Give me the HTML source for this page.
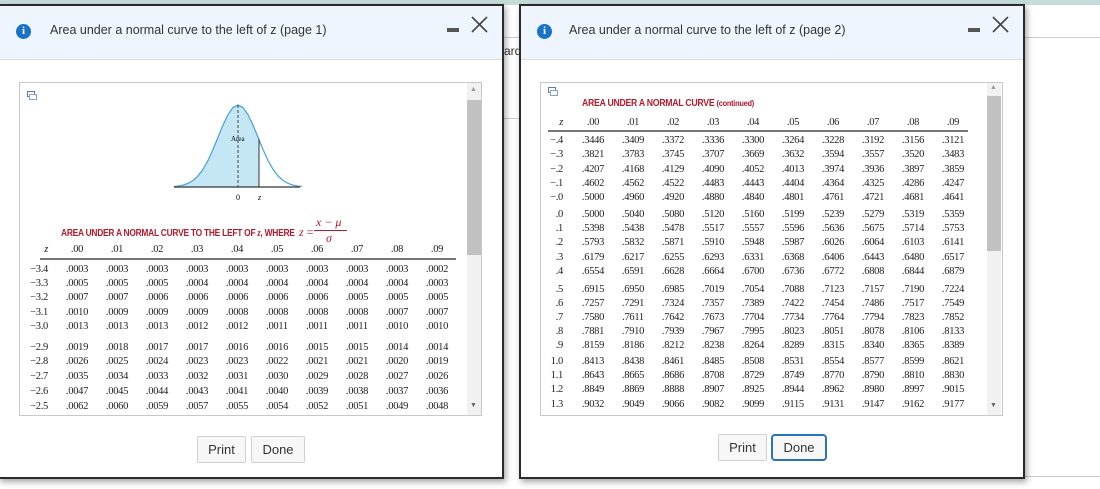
<!DOCTYPE html>
<html><head><meta charset="utf-8"><style>
*{margin:0;padding:0;box-sizing:border-box}
body{width:1100px;height:489px;overflow:hidden;background:#fff;position:relative;font-family:"Liberation Sans",sans-serif}
.abs{position:absolute}
.dlg{position:absolute;background:#fff;border:2px solid #2b2b2b;box-shadow:2px 3px 6px rgba(0,0,0,.35)}
.hdr{position:absolute;left:0;right:0;top:0;height:54px;background:#eff5fc;border-bottom:1px solid #d6dfe8}
.ttl{position:absolute;top:17px;font-size:12.5px;color:#333}
.info{position:absolute;top:18px;width:15px;height:15px;border-radius:50%;background:#1b73c7;color:#fff;font:bold 11px "Liberation Serif",serif;text-align:center;line-height:15px}
.min{position:absolute;top:22px;width:12px;height:4px;background:#555}
.x{position:absolute;top:10px}
.box{position:absolute;border:1px solid #c8c8c8;background:#fff;overflow:hidden}
.sb{position:absolute;background:#f1f1f1}
.th{position:absolute;background:#c1c1c1}
.btn{position:absolute;height:27px;border:1px solid #d0d0d0;background:#f7f7f7;border-radius:2px;font-size:13px;color:#333;text-align:center;line-height:25px}
.r{position:absolute;display:flex;font-family:"Liberation Serif",serif;font-size:10.5px;color:#222;white-space:nowrap;letter-spacing:-0.3px}
.r span{display:block;width:40px;text-align:center}
.r span.z{text-align:right}
.red{color:#b01c2e;font-family:"Liberation Sans",sans-serif;font-weight:bold;letter-spacing:-0.3px;position:absolute;transform-origin:left;white-space:nowrap}
.rule{position:absolute;height:2px;background:#777}
.l .z{width:35px;padding-right:9px}
.rr .z{width:40px;padding-right:10px}
</style></head><body>
<div class="abs" style="left:0;top:0;width:1100px;height:5px;background:#c6dcdb"></div>
<div class="abs" style="left:1020px;top:37px;width:80px;height:1px;background:#ccc"></div>
<div class="abs" style="left:500px;top:37px;width:25px;height:1px;background:#ccc"></div>
<div class="abs" style="left:500px;top:118px;width:25px;height:1px;background:#ccc"></div>
<div class="abs" style="left:504px;top:44px;font-size:12px;color:#333">ard</div>
<div class="abs" style="left:1020px;top:476px;width:80px;height:1px;background:#ccc"></div>

<!-- LEFT DIALOG -->
<div class="dlg" style="left:-2px;top:4px;width:506px;height:475px">
<div class="hdr"><div class="info" style="left:16px">i</div><div class="ttl" style="left:50px">Area under a normal curve to the left of z (page 1)</div><div class="min" style="left:447px"></div><svg class="x" style="left:471px" width="18" height="17"><path d="M1,1 L16,16 M16,1 L1,16" stroke="#444" stroke-width="1.6"/></svg></div>
</div>
<div class="box" style="left:19px;top:82px;width:463px;height:334px"></div>
<svg class="abs" style="left:27px;top:91px" width="10" height="9"><rect x="0.5" y="0.5" width="7" height="5" fill="none" stroke="#5a7fb8"/><rect x="2.5" y="3.5" width="7" height="5" fill="#fff" stroke="#8aa3cc"/></svg>
<div class="sb" style="left:467px;top:83px;width:14px;height:332px"></div>
<div class="th" style="left:467px;top:100px;width:14px;height:155px"></div>
<div class="abs" style="left:470px;top:86px;font-size:7px;color:#999">▲</div>
<div class="abs" style="left:470px;top:402px;font-size:7px;color:#666">▼</div>
<svg class="abs" style="left:160px;top:100px" width="150" height="105">
<path d="M14,86.5 L18,86.1 L23,85.1 L28,83.4 L33,80.5 L38,75.9 L43,69.3 L48,60.4 L53,49.5 L58,37.3 L63,25.1 L68,14.6 L73,7.5 L78,5 L83,7.5 L88,14.6 L93,25.1 L98,37.3 L99,39.7 L99,87 L14,87 Z" fill="#c5e6f5"/>
<path d="M14,86.5 L18,86.1 L23,85.1 L28,83.4 L33,80.5 L38,75.9 L43,69.3 L48,60.4 L53,49.5 L58,37.3 L63,25.1 L68,14.6 L73,7.5 L78,5 L83,7.5 L88,14.6 L93,25.1 L98,37.3 L103,49.5 L108,60.4 L113,69.3 L118,75.9 L123,80.5 L128,83.4 L133,85.1 L138,86.1 L142,86.5" fill="none" stroke="#4ea8d6" stroke-width="1.3" stroke-linejoin="round"/>
<line x1="14" y1="87" x2="140" y2="87" stroke="#333" stroke-width="1.2"/>
<line x1="99" y1="39" x2="99" y2="87" stroke="#333"/>
<line x1="78" y1="5" x2="78" y2="87" stroke="#444" stroke-dasharray="3,2"/>
<text x="71" y="41" font-size="7" font-family="Liberation Serif">Area</text>
<text x="76" y="100" font-size="8" font-family="Liberation Serif">0</text>
<text x="98" y="100" font-size="8" font-family="Liberation Serif" font-style="italic">z</text>
</svg>
<div class="red" style="left:61px;top:228px;font-size:10px;transform:scaleX(.84)">AREA UNDER A NORMAL CURVE TO THE LEFT OF <i style="font-family:'Liberation Serif'">z</i>, WHERE</div>
<div class="abs" style="left:299px;top:225px;color:#b01c2e;font:12px 'Liberation Serif',serif"><i>z</i> =</div>
<div class="abs" style="left:316px;top:215px;color:#b01c2e;font:italic 12px 'Liberation Serif',serif">x − μ</div>
<div class="abs" style="left:314px;top:230px;width:33px;height:1px;background:#b01c2e"></div>
<div class="abs" style="left:326px;top:231px;color:#b01c2e;font:italic 12px 'Liberation Serif',serif">σ</div>

<div class="r l" style="left:22px;top:244px"><span class="z"><i>z</i></span><span>.00</span><span>.01</span><span>.02</span><span>.03</span><span>.04</span><span>.05</span><span>.06</span><span>.07</span><span>.08</span><span>.09</span></div>
<div class="rule" style="left:40px;top:258px;width:416px"></div>
<div class="r l" style="left:22px;top:264px"><span class="z">−3.4</span><span>.0003</span><span>.0003</span><span>.0003</span><span>.0003</span><span>.0003</span><span>.0003</span><span>.0003</span><span>.0003</span><span>.0003</span><span>.0002</span></div>
<div class="r l" style="left:22px;top:278px"><span class="z">−3.3</span><span>.0005</span><span>.0005</span><span>.0005</span><span>.0004</span><span>.0004</span><span>.0004</span><span>.0004</span><span>.0004</span><span>.0004</span><span>.0003</span></div>
<div class="r l" style="left:22px;top:292px"><span class="z">−3.2</span><span>.0007</span><span>.0007</span><span>.0006</span><span>.0006</span><span>.0006</span><span>.0006</span><span>.0006</span><span>.0005</span><span>.0005</span><span>.0005</span></div>
<div class="r l" style="left:22px;top:307px"><span class="z">−3.1</span><span>.0010</span><span>.0009</span><span>.0009</span><span>.0009</span><span>.0008</span><span>.0008</span><span>.0008</span><span>.0008</span><span>.0007</span><span>.0007</span></div>
<div class="r l" style="left:22px;top:321px"><span class="z">−3.0</span><span>.0013</span><span>.0013</span><span>.0013</span><span>.0012</span><span>.0012</span><span>.0011</span><span>.0011</span><span>.0011</span><span>.0010</span><span>.0010</span></div>
<div class="r l" style="left:22px;top:342px"><span class="z">−2.9</span><span>.0019</span><span>.0018</span><span>.0017</span><span>.0017</span><span>.0016</span><span>.0016</span><span>.0015</span><span>.0015</span><span>.0014</span><span>.0014</span></div>
<div class="r l" style="left:22px;top:356px"><span class="z">−2.8</span><span>.0026</span><span>.0025</span><span>.0024</span><span>.0023</span><span>.0023</span><span>.0022</span><span>.0021</span><span>.0021</span><span>.0020</span><span>.0019</span></div>
<div class="r l" style="left:22px;top:371px"><span class="z">−2.7</span><span>.0035</span><span>.0034</span><span>.0033</span><span>.0032</span><span>.0031</span><span>.0030</span><span>.0029</span><span>.0028</span><span>.0027</span><span>.0026</span></div>
<div class="r l" style="left:22px;top:386px"><span class="z">−2.6</span><span>.0047</span><span>.0045</span><span>.0044</span><span>.0043</span><span>.0041</span><span>.0040</span><span>.0039</span><span>.0038</span><span>.0037</span><span>.0036</span></div>
<div class="r l" style="left:22px;top:401px"><span class="z">−2.5</span><span>.0062</span><span>.0060</span><span>.0059</span><span>.0057</span><span>.0055</span><span>.0054</span><span>.0052</span><span>.0051</span><span>.0049</span><span>.0048</span></div>
<div class="btn" style="left:197px;top:436px;width:49px">Print</div>
<div class="btn" style="left:251px;top:436px;width:54px">Done</div>

<!-- RIGHT DIALOG -->
<div class="dlg" style="left:519px;top:4px;width:506px;height:475px">
<div class="hdr"><div class="info" style="left:16px">i</div><div class="ttl" style="left:48px">Area under a normal curve to the left of z (page 2)</div><div class="min" style="left:447px"></div><svg class="x" style="left:471px" width="18" height="17"><path d="M1,1 L16,16 M16,1 L1,16" stroke="#444" stroke-width="1.6"/></svg></div>
</div>
<div class="box" style="left:540px;top:82px;width:463px;height:334px"></div>
<svg class="abs" style="left:548px;top:87px" width="10" height="9"><rect x="0.5" y="0.5" width="7" height="5" fill="none" stroke="#5a7fb8"/><rect x="2.5" y="3.5" width="7" height="5" fill="#fff" stroke="#8aa3cc"/></svg>
<div class="sb" style="left:987px;top:83px;width:14px;height:332px"></div>
<div class="th" style="left:987px;top:96px;width:14px;height:155px"></div>
<div class="abs" style="left:990px;top:84px;font-size:7px;color:#999">▲</div>
<div class="abs" style="left:990px;top:402px;font-size:7px;color:#666">▼</div>
<div class="red" style="left:582px;top:98px;font-size:10px;transform:scaleX(.87)">AREA UNDER A NORMAL CURVE <span style="font-size:8.5px">(continued)</span></div>
<div class="r rr" style="left:533px;top:117px"><span class="z"><i>z</i></span><span>.00</span><span>.01</span><span>.02</span><span>.03</span><span>.04</span><span>.05</span><span>.06</span><span>.07</span><span>.08</span><span>.09</span></div>
<div class="rule" style="left:548px;top:130px;width:420px"></div>
<div class="r rr" style="left:533px;top:135px"><span class="z">−.4</span><span>.3446</span><span>.3409</span><span>.3372</span><span>.3336</span><span>.3300</span><span>.3264</span><span>.3228</span><span>.3192</span><span>.3156</span><span>.3121</span></div>
<div class="r rr" style="left:533px;top:149px"><span class="z">−.3</span><span>.3821</span><span>.3783</span><span>.3745</span><span>.3707</span><span>.3669</span><span>.3632</span><span>.3594</span><span>.3557</span><span>.3520</span><span>.3483</span></div>
<div class="r rr" style="left:533px;top:164px"><span class="z">−.2</span><span>.4207</span><span>.4168</span><span>.4129</span><span>.4090</span><span>.4052</span><span>.4013</span><span>.3974</span><span>.3936</span><span>.3897</span><span>.3859</span></div>
<div class="r rr" style="left:533px;top:178px"><span class="z">−.1</span><span>.4602</span><span>.4562</span><span>.4522</span><span>.4483</span><span>.4443</span><span>.4404</span><span>.4364</span><span>.4325</span><span>.4286</span><span>.4247</span></div>
<div class="r rr" style="left:533px;top:192px"><span class="z">−.0</span><span>.5000</span><span>.4960</span><span>.4920</span><span>.4880</span><span>.4840</span><span>.4801</span><span>.4761</span><span>.4721</span><span>.4681</span><span>.4641</span></div>
<div class="r rr" style="left:533px;top:209px"><span class="z">.0</span><span>.5000</span><span>.5040</span><span>.5080</span><span>.5120</span><span>.5160</span><span>.5199</span><span>.5239</span><span>.5279</span><span>.5319</span><span>.5359</span></div>
<div class="r rr" style="left:533px;top:223px"><span class="z">.1</span><span>.5398</span><span>.5438</span><span>.5478</span><span>.5517</span><span>.5557</span><span>.5596</span><span>.5636</span><span>.5675</span><span>.5714</span><span>.5753</span></div>
<div class="r rr" style="left:533px;top:237px"><span class="z">.2</span><span>.5793</span><span>.5832</span><span>.5871</span><span>.5910</span><span>.5948</span><span>.5987</span><span>.6026</span><span>.6064</span><span>.6103</span><span>.6141</span></div>
<div class="r rr" style="left:533px;top:252px"><span class="z">.3</span><span>.6179</span><span>.6217</span><span>.6255</span><span>.6293</span><span>.6331</span><span>.6368</span><span>.6406</span><span>.6443</span><span>.6480</span><span>.6517</span></div>
<div class="r rr" style="left:533px;top:266px"><span class="z">.4</span><span>.6554</span><span>.6591</span><span>.6628</span><span>.6664</span><span>.6700</span><span>.6736</span><span>.6772</span><span>.6808</span><span>.6844</span><span>.6879</span></div>
<div class="r rr" style="left:533px;top:284px"><span class="z">.5</span><span>.6915</span><span>.6950</span><span>.6985</span><span>.7019</span><span>.7054</span><span>.7088</span><span>.7123</span><span>.7157</span><span>.7190</span><span>.7224</span></div>
<div class="r rr" style="left:533px;top:298px"><span class="z">.6</span><span>.7257</span><span>.7291</span><span>.7324</span><span>.7357</span><span>.7389</span><span>.7422</span><span>.7454</span><span>.7486</span><span>.7517</span><span>.7549</span></div>
<div class="r rr" style="left:533px;top:312px"><span class="z">.7</span><span>.7580</span><span>.7611</span><span>.7642</span><span>.7673</span><span>.7704</span><span>.7734</span><span>.7764</span><span>.7794</span><span>.7823</span><span>.7852</span></div>
<div class="r rr" style="left:533px;top:326px"><span class="z">.8</span><span>.7881</span><span>.7910</span><span>.7939</span><span>.7967</span><span>.7995</span><span>.8023</span><span>.8051</span><span>.8078</span><span>.8106</span><span>.8133</span></div>
<div class="r rr" style="left:533px;top:340px"><span class="z">.9</span><span>.8159</span><span>.8186</span><span>.8212</span><span>.8238</span><span>.8264</span><span>.8289</span><span>.8315</span><span>.8340</span><span>.8365</span><span>.8389</span></div>
<div class="r rr" style="left:533px;top:356px"><span class="z">1.0</span><span>.8413</span><span>.8438</span><span>.8461</span><span>.8485</span><span>.8508</span><span>.8531</span><span>.8554</span><span>.8577</span><span>.8599</span><span>.8621</span></div>
<div class="r rr" style="left:533px;top:370px"><span class="z">1.1</span><span>.8643</span><span>.8665</span><span>.8686</span><span>.8708</span><span>.8729</span><span>.8749</span><span>.8770</span><span>.8790</span><span>.8810</span><span>.8830</span></div>
<div class="r rr" style="left:533px;top:384px"><span class="z">1.2</span><span>.8849</span><span>.8869</span><span>.8888</span><span>.8907</span><span>.8925</span><span>.8944</span><span>.8962</span><span>.8980</span><span>.8997</span><span>.9015</span></div>
<div class="r rr" style="left:533px;top:399px"><span class="z">1.3</span><span>.9032</span><span>.9049</span><span>.9066</span><span>.9082</span><span>.9099</span><span>.9115</span><span>.9131</span><span>.9147</span><span>.9162</span><span>.9177</span></div>
<div class="btn" style="left:718px;top:434px;width:49px">Print</div>
<div class="btn" style="left:771px;top:434px;width:56px;border:2px solid #2a73b8;border-radius:4px;line-height:23px">Done</div>
</body></html>
